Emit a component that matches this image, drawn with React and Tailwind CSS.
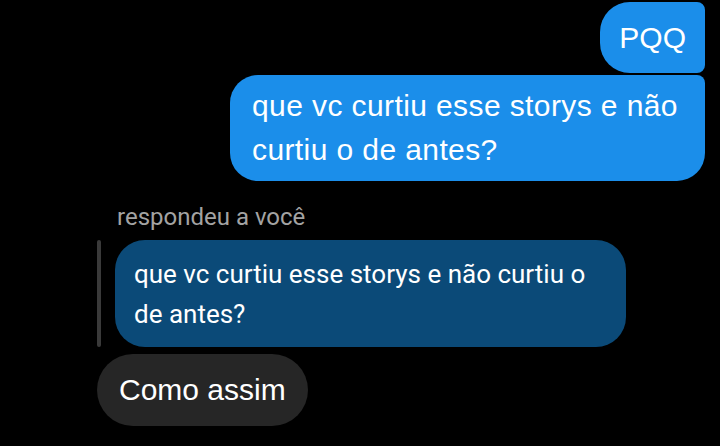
export default function App() {
  return (
    <div className="h-[446px] w-[720px] overflow-hidden bg-black font-['Liberation_Sans','Roboto',sans-serif] text-white">
      {/* Mensagens enviadas */}
      <div className="flex flex-col items-end gap-[2px] pt-[2px] pr-[15px]">
        <div className="rounded-l-[30px] rounded-r-[8px] bg-[#1b8eea] px-[19px] py-[13px] text-[30px] leading-[45px]">
          PQQ
        </div>
        <div className="w-[475px] rounded-l-[28px] rounded-tr-[8px] rounded-br-[28px] bg-[#1b8eea] py-[9px] pl-[22px] pr-[18px] text-[30px] leading-[44px] tracking-[0.4px]">
          que vc curtiu esse storys e não curtiu o de antes?
        </div>
      </div>

      {/* Resposta */}
      <div className="flex flex-col items-start pl-[97px] pt-[22px]">
        <p className="pl-[20px] font-['Roboto',sans-serif] text-[24px] leading-[28px] text-[#a3a3a3]">respondeu a você</p>
        <div className="mt-[9px] flex gap-[14px]">
          <div className="w-[4px] shrink-0 rounded-full bg-[#3a3a3a]" />
          <div className="w-[511px] rounded-[30px] bg-[#0b4a78] pt-[14px] pb-[13px] pl-[19px] pr-[28px] font-['Roboto',sans-serif] text-[26px] leading-[40px]">
            que vc curtiu esse storys e não curtiu o de antes?
          </div>
        </div>
        <div className="mt-[7px] rounded-full bg-[#262626] px-[22px] py-[14px] text-[30px] leading-[44px]">
          Como assim
        </div>
      </div>
    </div>
  )
}
